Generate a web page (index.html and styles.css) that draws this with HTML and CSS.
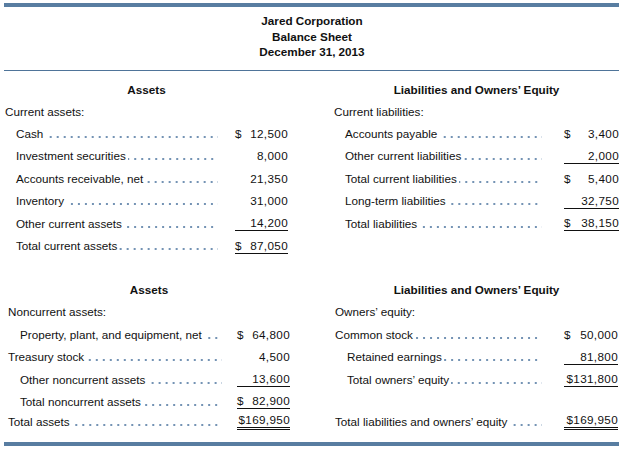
FILE: index.html
```html
<!DOCTYPE html>
<html>
<head>
<meta charset="utf-8">
<title>Jared Corporation Balance Sheet</title>
<link rel="stylesheet" href="styles.css">
</head>
<body>
<div class="sheet">
  <div class="bar thick"></div>
  <header class="title">
    <div>Jared Corporation</div>
    <div>Balance Sheet</div>
    <div>December 31, 2013</div>
  </header>
  <div class="bar thin"></div>

  <section class="part part-top">
    <div class="col col-lt">
      <h2>Assets</h2>
      <div class="sub">Current assets:</div>
      <div class="row in"><span class="lbl"><span>Cash</span><span class="dots"></span></span><span class="amt"><span>$</span><span class="n">12,500</span></span></div>
      <div class="row in"><span class="lbl"><span>Investment securities</span><span class="dots"></span></span><span class="amt"><span class="n">8,000</span></span></div>
      <div class="row in"><span class="lbl"><span>Accounts receivable, net</span><span class="dots"></span></span><span class="amt"><span class="n">21,350</span></span></div>
      <div class="row in"><span class="lbl"><span>Inventory</span><span class="dots"></span></span><span class="amt"><span class="n">31,000</span></span></div>
      <div class="row in"><span class="lbl"><span>Other current assets</span><span class="dots"></span></span><span class="amt u"><span class="n">14,200</span></span></div>
      <div class="row in"><span class="lbl"><span>Total current assets</span><span class="dots"></span></span><span class="amt u"><span>$</span><span class="n">87,050</span></span></div>
    </div>
    <div class="col col-rt">
      <h2>Liabilities and Owners’ Equity</h2>
      <div class="sub">Current liabilities:</div>
      <div class="row in"><span class="lbl"><span>Accounts payable</span><span class="dots"></span></span><span class="amt"><span>$</span><span class="n">3,400</span></span></div>
      <div class="row in"><span class="lbl"><span>Other current liabilities</span><span class="dots"></span></span><span class="amt u"><span class="n">2,000</span></span></div>
      <div class="row in"><span class="lbl"><span>Total current liabilities</span><span class="dots"></span></span><span class="amt"><span>$</span><span class="n">5,400</span></span></div>
      <div class="row in"><span class="lbl"><span>Long-term liabilities</span><span class="dots"></span></span><span class="amt u"><span class="n">32,750</span></span></div>
      <div class="row in"><span class="lbl"><span>Total liabilities</span><span class="dots"></span></span><span class="amt u"><span>$</span><span class="n">38,150</span></span></div>
    </div>
  </section>

  <section class="part part-bottom">
    <div class="col col-lb">
      <h2>Assets</h2>
      <div class="sub">Noncurrent assets:</div>
      <div class="row in"><span class="lbl"><span>Property, plant, and equipment, net</span><span class="dots"></span></span><span class="amt"><span>$</span><span class="n">64,800</span></span></div>
      <div class="row"><span class="lbl"><span>Treasury stock</span><span class="dots"></span></span><span class="amt"><span class="n">4,500</span></span></div>
      <div class="row in"><span class="lbl"><span>Other noncurrent assets</span><span class="dots"></span></span><span class="amt u"><span class="n">13,600</span></span></div>
      <div class="row in"><span class="lbl"><span>Total noncurrent assets</span><span class="dots"></span></span><span class="amt u"><span>$</span><span class="n">82,900</span></span></div>
      <div class="row last"><span class="lbl"><span>Total assets</span><span class="dots"></span></span><span class="amt uu"><span class="n">$169,950</span></span></div>
    </div>
    <div class="col col-rb">
      <h2>Liabilities and Owners’ Equity</h2>
      <div class="sub">Owners’ equity:</div>
      <div class="row"><span class="lbl"><span>Common stock</span><span class="dots"></span></span><span class="amt"><span>$</span><span class="n">50,000</span></span></div>
      <div class="row in"><span class="lbl"><span>Retained earnings</span><span class="dots"></span></span><span class="amt u"><span class="n">81,800</span></span></div>
      <div class="row in"><span class="lbl"><span>Total owners’ equity</span><span class="dots"></span></span><span class="amt u"><span class="n">$131,800</span></span></div>
      <div class="row spacer"></div>
      <div class="row last"><span class="lbl"><span>Total liabilities and owners’ equity</span><span class="dots"></span></span><span class="amt uu"><span class="n">$169,950</span></span></div>
    </div>
  </section>

  <div class="bar thick bottom-bar"></div>
</div>
</body>
</html>
```

FILE: styles.css
```css
html, body {
  margin: 0;
  padding: 0;
  background: #ffffff;
}

body {
  font-family: "Liberation Sans", Arial, sans-serif;
  font-size: 11.7px;
  color: #111111;
}

.sheet {
  width: 624px;
  display: flex;
  flex-direction: column;
}

.bar {
  margin-left: 4px;
  margin-right: 5px;
  background: #587da1;
}

.bar.thick {
  height: 4px;
  margin-top: 3px;
}

.bar.thin {
  height: 1px;
  margin-top: 10px;
  background: #4f7499;
}

.bar.bottom-bar {
  margin-top: 12px;
}

.title {
  margin-top: 6px;
  text-align: center;
  font-weight: bold;
  line-height: 15.5px;
}

.part {
  display: grid;
  grid-template-columns: 312px 312px;
  align-items: start;
}

.part-top {
  margin-top: 8px;
}

.part-bottom {
  margin-top: 22px;
}

.col h2 {
  margin: 0;
  font-size: 11.7px;
  font-weight: bold;
  text-align: center;
  height: 22px;
  line-height: 22px;
}

.sub {
  height: 22.4px;
  line-height: 22.4px;
  white-space: nowrap;
}

.row {
  height: 22.4px;
  display: flex;
  align-items: center;
}

.row.last {
  height: 17px;
}

.lbl {
  flex: 1;
  min-width: 0;
  display: flex;
  align-items: baseline;
  white-space: nowrap;
  line-height: 14px;
}

.dots {
  flex: 1;
  height: 2px;
  margin-left: 2px;
  background-image: linear-gradient(to right, #7493b4 0, #7493b4 2px, transparent 2px);
  background-size: 7px 2px;
  background-repeat: repeat-x;
  background-position: right bottom;
}

.amt {
  display: flex;
  justify-content: space-between;
  line-height: 14px;
  letter-spacing: 0.35px;
  white-space: nowrap;
}

.amt .n {
  margin-left: auto;
}

.amt.u {
  border-bottom: 1px solid #111111;
}

.amt.uu {
  border-bottom: 3px double #111111;
}

/* top-left: current assets */
.col-lt {
  padding-left: 5px;
  padding-right: 24px;
}
.col-lt .row.in { padding-left: 11px; }
.col-lt .amt { width: 53px; margin-left: 17px; }

/* top-right: current liabilities */
.col-rt {
  padding-left: 22px;
  padding-right: 5px;
}
.col-rt .row.in { padding-left: 11px; }
.col-rt .amt { width: 55px; margin-left: 22px; }

/* bottom-left: noncurrent assets */
.col-lb {
  padding-left: 8px;
  padding-right: 22px;
}
.col-lb .row.in { padding-left: 12px; }
.col-lb .amt { width: 53px; margin-left: 15px; }

/* bottom-right: owners' equity */
.col-rb {
  padding-left: 23px;
  padding-right: 6px;
}
.col-rb .row.in { padding-left: 12px; }
.col-rb .amt { width: 54px; margin-left: 22px; }
```
